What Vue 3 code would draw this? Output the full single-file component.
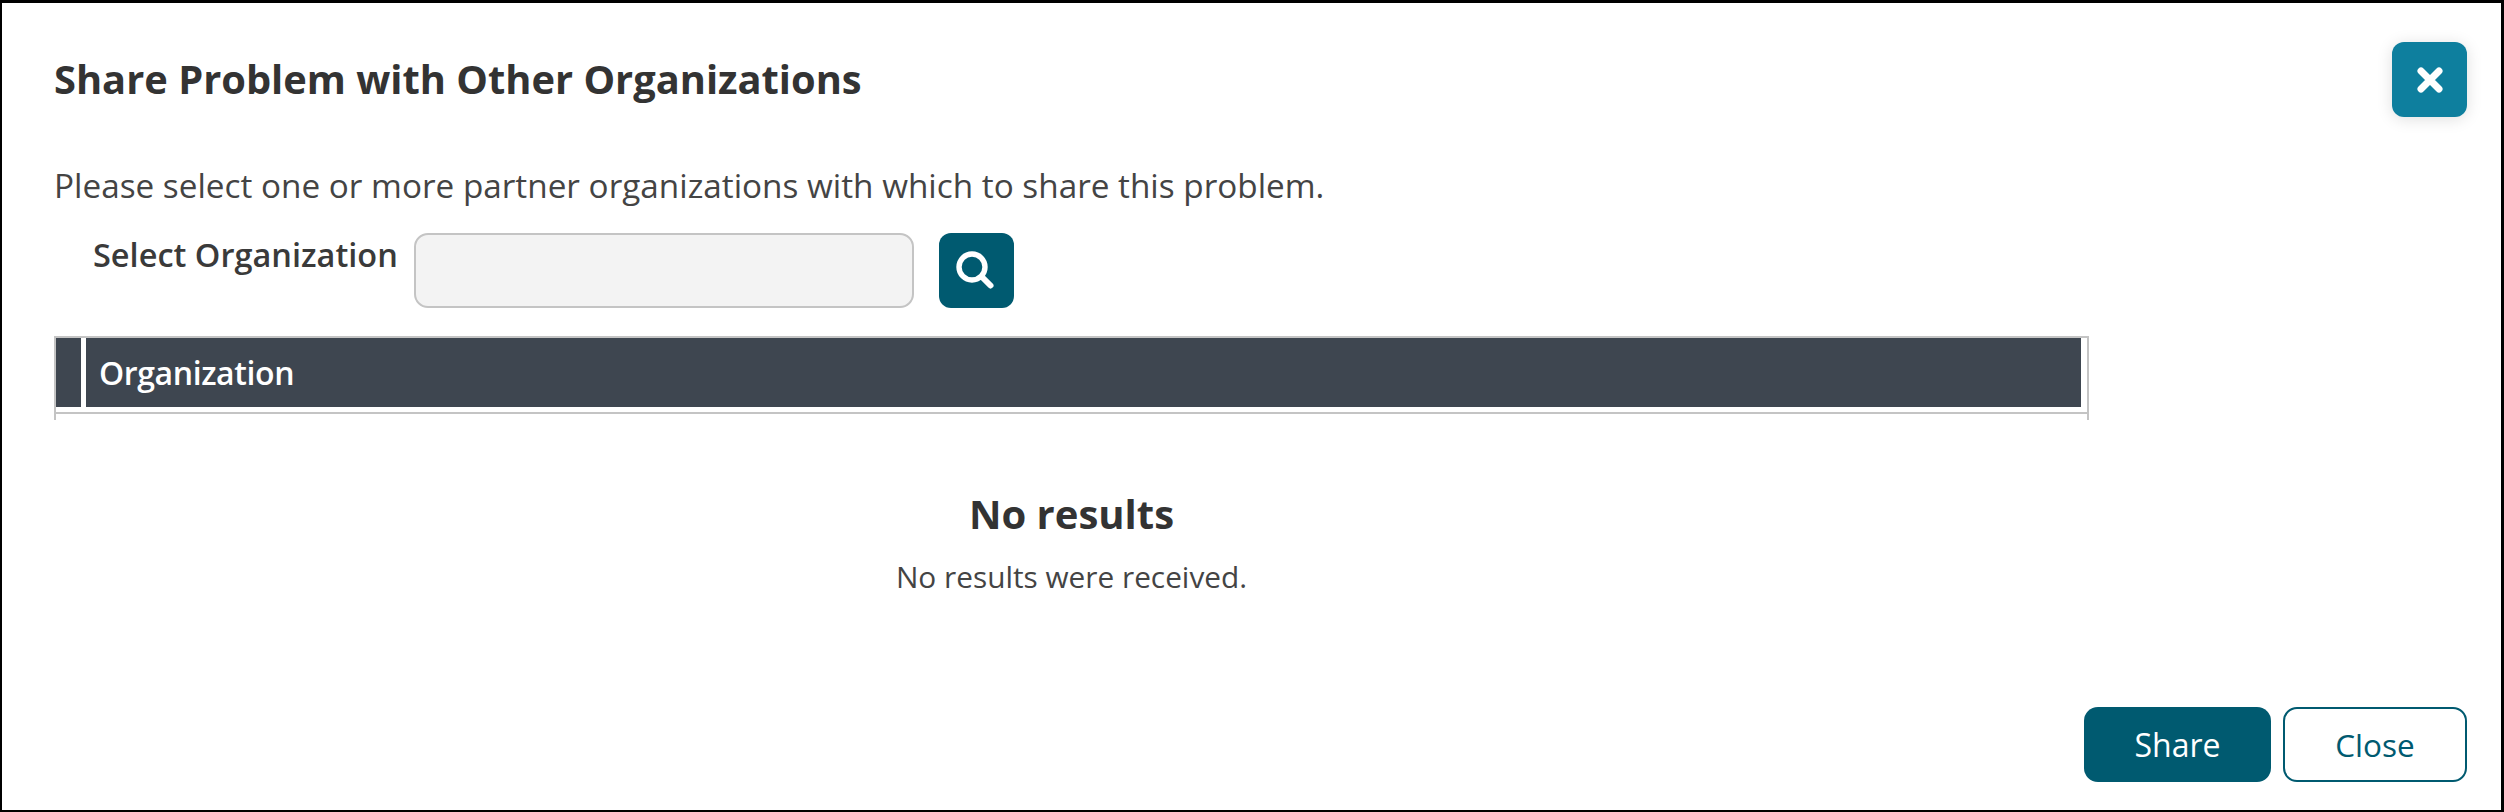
<script setup>
const columns = ['Organization'];
</script>

<template>
  <div class="dialog">
    <div class="dialog-header">
      <h2 class="dialog-title">Share Problem with Other Organizations</h2>
      <button class="icon-btn close-x" aria-label="Close">
        <svg width="30" height="30" viewBox="0 0 30 30">
          <path d="M6 6 L24 24 M24 6 L6 24" stroke="#fff" stroke-width="7" stroke-linecap="round" fill="none" />
        </svg>
      </button>
    </div>

    <p class="intro">Please select one or more partner organizations with which to share this problem.</p>

    <div class="search-row">
      <label class="search-label">Select Organization</label>
      <input class="search-input" type="text" />
      <button class="icon-btn search-btn" aria-label="Search">
        <svg width="40" height="40" viewBox="0 0 40 40">
          <circle cx="16" cy="16" r="13" stroke="#fff" stroke-width="5.4" fill="none" />
          <path d="M26.5 26.5 L34.5 34.5" stroke="#fff" stroke-width="6" stroke-linecap="round" fill="none" />
        </svg>
      </button>
    </div>

    <div class="grid">
      <div class="grid-head">
        <div class="grid-spacer"></div>
        <div v-for="col in columns" :key="col" class="grid-col">{{ col }}</div>
      </div>
    </div>

    <div class="empty">
      <h3 class="empty-title">No results</h3>
      <p class="empty-text">No results were received.</p>
    </div>

    <div class="dialog-footer">
      <button class="btn btn-primary">Share</button>
      <button class="btn btn-outline">Close</button>
    </div>
  </div>
</template>

<style>
html, body {
  margin: 0;
  background: #fff;
}
</style>

<style scoped>
.dialog {
  box-sizing: border-box;
  width: 2504px;
  height: 812px;
  border: 2px solid #000;
  border-top-width: 3px;
  border-right-width: 3px;
  background: #fff;
  color: #333;
  font-family: "Open Sans", "Liberation Sans", sans-serif;
  display: flex;
  flex-direction: column;
  padding: 0 34px 0 52px;
}

.dialog-header {
  display: flex;
  justify-content: space-between;
  align-items: flex-start;
  padding-top: 39px;
}

.dialog-title {
  margin: 10px 0 0;
  font-size: 39.85px;
  line-height: 54px;
  font-weight: 700;
}

.icon-btn {
  width: 75px;
  height: 75px;
  padding: 0;
  border: none;
  border-radius: 12px;
  display: flex;
  align-items: center;
  justify-content: center;
  flex: none;
}

.close-x {
  background: #0e7f9e;
  box-shadow: 0 2px 16px rgba(0, 0, 0, 0.13);
}

.intro {
  margin: 46px 0 0;
  font-size: 33.3px;
  line-height: 44px;
  font-weight: 400;
  color: #444;
}

.search-row {
  display: flex;
  align-items: flex-start;
  margin-top: 26px;
}

.search-label {
  margin: 0 16px 0 39px;
  font-size: 32.5px;
  line-height: 44px;
  font-weight: 600;
  color: #3a3a3a;
}

.search-input {
  box-sizing: border-box;
  width: 500px;
  height: 75px;
  border: 2px solid #c4c4c4;
  border-radius: 14px;
  background: #f3f3f3;
  outline: none;
}

.search-btn {
  margin-left: 25px;
  background: #005a70;
}

.grid {
  box-sizing: border-box;
  width: 2035px;
  height: 84px;
  margin-top: 28px;
  padding: 0 6px 6px 0;
  border: 2px solid #c4c4c4;
  border-bottom: none;
  position: relative;
}

.grid::after {
  content: "";
  position: absolute;
  left: 0;
  right: 0;
  top: 74px;
  height: 2px;
  background: #c4c4c4;
}

.grid-head {
  display: flex;
  height: 69px;
  gap: 5px;
}

.grid-spacer {
  width: 25px;
  background: #3e4650;
}

.grid-col {
  flex: 1;
  padding-left: 13px;
  background: #3e4650;
  color: #fff;
  font-size: 32px;
  font-weight: 600;
  letter-spacing: -0.4px;
  line-height: 69px;
}

.empty {
  width: 2035px;
  text-align: center;
  margin-top: 67px;
}

.empty-title {
  margin: 0;
  font-size: 40px;
  line-height: 54px;
  font-weight: 700;
}

.empty-text {
  margin: 16px 0 0;
  font-size: 29.8px;
  line-height: 40px;
  font-weight: 400;
  color: #444;
}

.dialog-footer {
  margin-top: auto;
  margin-bottom: 28px;
  display: flex;
  justify-content: flex-end;
  gap: 12px;
}

.btn {
  box-sizing: border-box;
  height: 75px;
  border-radius: 14px;
  font-family: inherit;
  font-size: 32px;
  padding: 0;
}

.btn-primary {
  width: 187px;
  background: #005a70;
  border: none;
  color: #fff;
}

.btn-outline {
  width: 184px;
  background: #fff;
  border: 2px solid #005a70;
  color: #005a70;
  font-size: 31.5px;
}
</style>
